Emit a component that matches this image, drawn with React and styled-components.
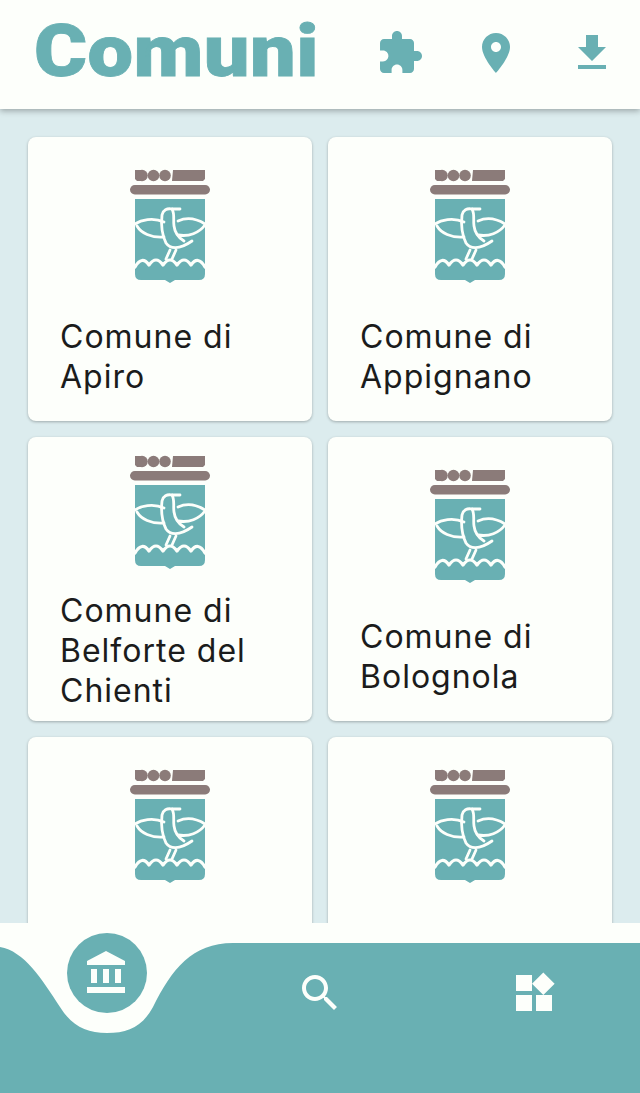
import React from 'react';
import styled, { createGlobalStyle } from 'styled-components';

const TEAL = '#69b0b3';
const PAPER = '#fdfffb';
const SKY = '#dcecee';

const GlobalStyle = createGlobalStyle`
  html, body { margin: 0; padding: 0; height: 100%; }
  body { background: ${SKY}; font-family: Inter, "Liberation Sans", sans-serif; overflow: hidden; }
  #root { height: 100%; }
`;

const Screen = styled.div`
  width: 640px;
  height: 1093px;
  display: flex;
  flex-direction: column;
  position: relative;
  overflow: hidden;
  background: ${SKY};
`;

const Header = styled.header`
  height: 109px;
  flex: none;
  background: ${PAPER};
  box-shadow: 0 2px 6px rgba(0, 0, 0, 0.3);
  display: flex;
  align-items: center;
  padding: 0 24px 0 34px;
  box-sizing: border-box;
  position: relative;
  z-index: 2;
`;

const Title = styled.h1`
  margin: 0 0 6px;
  flex: 1;
  font-family: Roboto, "Liberation Sans", sans-serif;
  font-weight: 900;
  font-size: 73px;
  line-height: 1;
  letter-spacing: 0.4px;
  color: ${TEAL};
  -webkit-text-stroke: 0.8px ${TEAL};
  transform: scaleX(1.11);
  transform-origin: left center;
`;

const HeaderIcons = styled.div`
  display: flex;
  align-items: center;
  gap: 48px;
  margin-bottom: 4px;
`;

const HeaderIcon = styled.svg`
  width: 48px;
  height: 48px;
  fill: ${TEAL};
  display: block;
`;

const Grid = styled.main`
  flex: 1;
  display: grid;
  grid-template-columns: 284px 284px;
  grid-auto-rows: 284px;
  gap: 16px;
  padding: 28px 28px 0;
  overflow: hidden;
`;

const Card = styled.article`
  background: ${PAPER};
  border-radius: 8px;
  box-shadow: 0 1px 3px rgba(0, 0, 0, 0.28);
  display: flex;
  flex-direction: column;
  align-items: center;
  justify-content: center;
  padding: 6px 33px 0;
  box-sizing: border-box;
  overflow: hidden;
`;

const Crest = styled.svg`
  width: 82px;
  height: 116px;
  flex: none;
  display: block;
`;

const CardName = styled.div`
  align-self: stretch;
  margin-top: ${(p) => (p.$long ? 21 : 33)}px;
  margin-left: -1px;
  font-family: Inter, "Liberation Sans", sans-serif;
  font-size: 32px;
  line-height: 40px;
  letter-spacing: 1px;
  color: #1b1c1c;
`;

const BottomBar = styled.nav`
  position: absolute;
  left: 0;
  right: 0;
  bottom: 0;
  height: 170px;
  z-index: 3;
  background: ${PAPER};
`;

const BarShape = styled.svg`
  position: absolute;
  left: 0;
  top: 0;
  width: 640px;
  height: 170px;
  display: block;
`;

const ActiveTab = styled.div`
  position: absolute;
  left: 67px;
  top: 10px;
  width: 80px;
  height: 80px;
  border-radius: 50%;
  background: ${TEAL};
  display: flex;
  align-items: center;
  justify-content: center;
`;

const TabIcon = styled.svg`
  position: absolute;
  width: 48px;
  height: 48px;
  fill: ${PAPER};
  left: ${(p) => p.$left}px;
  top: 46px;
`;

const ActiveIcon = styled.svg`
  width: 48px;
  height: 48px;
  fill: ${PAPER};
`;

const CrestArt = () => (
  <Crest viewBox="0 0 82 116">
    <g fill="#8b7b79">
      <path d="M6 2h7v11H8l-2-2z" />
      <circle cx="13" cy="7.500" r="5.800" />
      <circle cx="24.500" cy="7.500" r="5.800" />
      <circle cx="36" cy="7.500" r="5.800" />
      <path d="M44 2h32v9l-2 2H43z" />
      <rect x="1" y="17" width="80" height="9.500" rx="4.750" />
    </g>
    <path fill={TEAL} d="M6 31h70v75q0 6-6 6H46l-5 3-5-3H12q-6 0-6-6z" />
    <g fill="none" stroke={PAPER} strokeWidth="2.800" strokeLinecap="round" strokeLinejoin="round">
      <path d="M6 56C12 52 24 49 35 54" />
      <path d="M8 58C12 65 22 70 35 69" />
      <path d="M49 53C58 49 68 51 76 56" />
      <path d="M49 67C60 69 70 65 76 57" />
      <path d="M51 41L43 41C38 40 34 42 33 47C32 56 33 67 37 75C41 81 50 82 63 73" />
      <path d="M43 41C46 46 44 52 45 58C46 66 50 70 55 73" />
      <path d="M41 82L37 91M47 82L43 91" />
      <path strokeWidth="3.200" d="M6 99Q13 87 20 97Q27 87 34 97Q41 87 48 97Q55 87 62 97Q69 87 76 99" />
    </g>
  </Crest>
);

const comuni = [
  { name: ['Comune di', 'Apiro'] },
  { name: ['Comune di', 'Appignano'] },
  { name: ['Comune di', 'Belforte del', 'Chienti'], long: true },
  { name: ['Comune di', 'Bolognola'] },
  { name: ['Comune di', 'Bolognola'] },
  { name: ['Comune di', 'Bolognola'] },
];

const App = () => (
  <Screen>
    <GlobalStyle />
    <Header>
      <Title>Comuni</Title>
      <HeaderIcons>
        <HeaderIcon viewBox="0 0 24 24">
          <path d="M20.500 11H19V7c0-1.100-.9-2-2-2h-4V3.500C13 2.120 11.880 1 10.500 1S8 2.120 8 3.500V5H4c-1.100 0-1.990.9-1.990 2v3.800H3.500c1.490 0 2.700 1.210 2.700 2.700s-1.210 2.700-2.700 2.700H2V20c0 1.100.9 2 2 2h3.800v-1.500c0-1.490 1.210-2.700 2.700-2.700 1.490 0 2.700 1.210 2.700 2.700V22H17c1.100 0 2-.9 2-2v-4h1.500c1.380 0 2.500-1.120 2.500-2.500S21.880 11 20.500 11z" />
        </HeaderIcon>
        <HeaderIcon viewBox="0 0 24 24">
          <path d="M12 2C8.130 2 5 5.130 5 9c0 5.250 7 13 7 13s7-7.750 7-13c0-3.870-3.130-7-7-7zm0 9.500c-1.380 0-2.500-1.120-2.500-2.500s1.120-2.500 2.500-2.500 2.500 1.120 2.500 2.500-1.120 2.500-2.500 2.500z" />
        </HeaderIcon>
        <HeaderIcon viewBox="0 0 24 24">
          <path d="M19 9h-4V3H9v6H5l7 7 7-7zM5 18v2h14v-2H5z" />
        </HeaderIcon>
      </HeaderIcons>
    </Header>
    <Grid>
      {comuni.map((c, i) => (
        <Card key={i}>
          <CrestArt />
          <CardName $long={c.long}>
            {c.name.map((line) => (
              <div key={line}>{line}</div>
            ))}
          </CardName>
        </Card>
      ))}
    </Grid>
    <BottomBar>
      <BarShape viewBox="0 0 640 170">
        <path
          fill={TEAL}
          d="M0 24C24 28 42 56 60 84C72 103 86 110 107 110C128 110 142 104 153 84C172 46 192 20 233 20H640V170H0Z"
        />
      </BarShape>
      <ActiveTab>
        <ActiveIcon viewBox="0 0 24 24">
          <path d="M4 10v7h3v-7H4zm6 0v7h3v-7h-3zM2 22h19v-3H2v3zm14-12v7h3v-7h-3zm-4.500-9L2 6v2h19V6l-9.500-5z" />
        </ActiveIcon>
      </ActiveTab>
      <TabIcon $left={296} viewBox="0 0 24 24">
        <path d="M15.500 14h-.79l-.28-.27C15.410 12.590 16 11.110 16 9.500 16 5.910 13.090 3 9.500 3S3 5.910 3 9.500 5.910 16 9.500 16c1.610 0 3.090-.59 4.230-1.570l.27.28v.79l5 4.990L20.490 19l-4.990-5zm-6 0C7.010 14 5 11.990 5 9.500S7.010 5 9.500 5 14 7.010 14 9.500 11.990 14 9.500 14z" />
      </TabIcon>
      <TabIcon $left={510} viewBox="0 0 24 24">
        <path d="M13 13v8h8v-8h-8zM3 21h8v-8H3v8zM3 3v8h8V3H3zm13.660-1.310L11 7.340 16.660 13l5.660-5.660-5.660-5.650z" />
      </TabIcon>
    </BottomBar>
  </Screen>
);

export default App;
